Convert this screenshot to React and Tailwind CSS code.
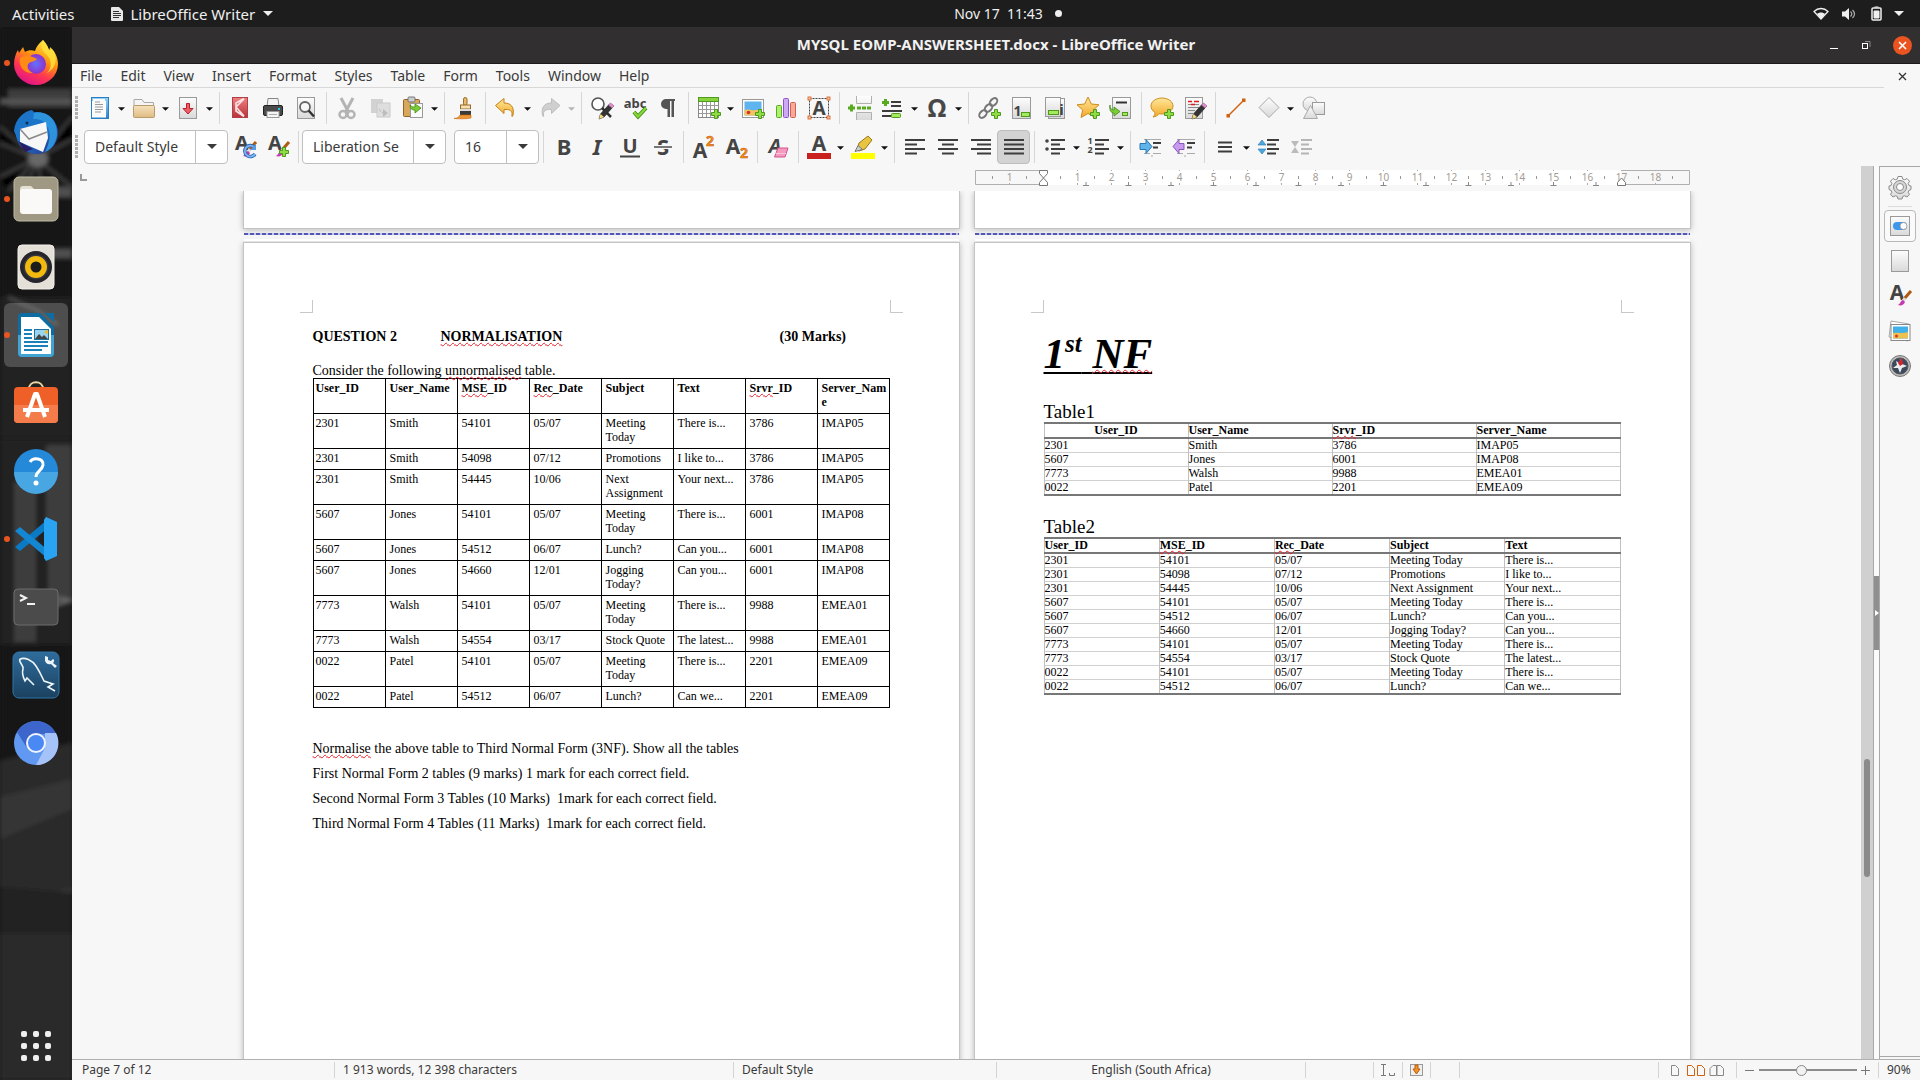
import React from 'react';

/* ---------- shared drawing helpers ---------- */

const Defs = () => (
  <svg width="0" height="0" className="absolute" aria-hidden="true">
    <defs>
      <linearGradient id="paper" x1="0" y1="0" x2="0" y2="1"><stop offset="0" stopColor="#fdfdfd" /><stop offset="1" stopColor="#d9d9d9" /></linearGradient>
      <linearGradient id="blue" x1="0" y1="0" x2="0" y2="1"><stop offset="0" stopColor="#8fd0f8" /><stop offset="1" stopColor="#2f86cf" /></linearGradient>
      <linearGradient id="tan" x1="0" y1="0" x2="0" y2="1"><stop offset="0" stopColor="#f6e2bd" /><stop offset="1" stopColor="#dfbb83" /></linearGradient>
      <linearGradient id="gold" x1="0" y1="0" x2="0" y2="1"><stop offset="0" stopColor="#ffe79a" /><stop offset="1" stopColor="#f2a929" /></linearGradient>
      <linearGradient id="leaf" x1="0" y1="0" x2="0" y2="1"><stop offset="0" stopColor="#b6ef6f" /><stop offset="1" stopColor="#5fae20" /></linearGradient>
      <linearGradient id="rose" x1="0" y1="0" x2="0" y2="1"><stop offset="0" stopColor="#f08080" /><stop offset="1" stopColor="#b8323c" /></linearGradient>
      <linearGradient id="fox" x1="0.8" y1="0" x2="0.3" y2="1"><stop offset="0" stopColor="#fff44f" /><stop offset="0.4" stopColor="#ff980e" /><stop offset="0.7" stopColor="#ff3750" /><stop offset="1" stopColor="#e0128d" /></linearGradient>
      <radialGradient id="globe"><stop offset="0" stopColor="#6173ff" /><stop offset="1" stopColor="#9030c8" /></radialGradient>
      <linearGradient id="bird" x1="0" y1="0" x2="1" y2="1"><stop offset="0" stopColor="#1f8fe0" /><stop offset="0.6" stopColor="#1e5fb8" /><stop offset="1" stopColor="#33307f" /></linearGradient>
      <linearGradient id="mysql" x1="0" y1="0" x2="0" y2="1"><stop offset="0" stopColor="#2f6c9c" /><stop offset="1" stopColor="#1b415f" /></linearGradient>
      <filter id="soft"><feGaussianBlur stdDeviation="2" /></filter>
    </defs>
  </svg>
);

const Svg = ({ s = 24, children }) => (
  <svg width={s} height={s} viewBox={`0 0 ${s} ${s}`} fill="none" aria-hidden="true" className="shrink-0 overflow-visible">{children}</svg>
);

const Glyph = ({ x, y, size, children, fill = '#444', ...rest }) => (
  <text x={x} y={y} fontSize={size} fontWeight="700" fontFamily='"Noto Sans", sans-serif' textAnchor="middle" fill={fill} {...rest}>{children}</text>
);

const Plus = ({ x = 14, y = 13 }) => (
  <path transform={`translate(${x} ${y})`} d="M3.5.5h3v3h3v3h-3v3h-3v-3h-3v-3h3z" fill="#8fdc45" stroke="#4d9a1c" />
);

const Sheet = ({ x = 3.5, y = 1.5, w = 17, h = 21 }) => (
  <rect x={x} y={y} width={w} height={h} fill="url(#paper)" stroke="#9a9a9a" />
);

const Lines = ({ rows, c = '#3d3d3d', w = 2 }) => (
  <>{rows.map(([x1, x2, y]) => <path key={`${x1}-${y}`} d={`M${x1} ${y}H${x2}`} stroke={c} strokeWidth={w} />)}</>
);

const Brush = () => (
  <g>
    <path d="M23 7l-7 8" stroke="#b05a10" strokeWidth="3" /><path d="M17 14l-2 3" stroke="#ddd" strokeWidth="3" />
    <path d="M15 16c-2 0-2 3-5 5 3 1 6 0 7-3z" fill="#c43bb0" />
  </g>
);

const Pencil = () => (
  <g>
    <path d="M9 23l1.500-5 8-9 3.500 3-8 9z" fill="#333" stroke="#222" strokeWidth=".7" />
    <path d="M18.500 9l2-2 3.500 3-2 2z" fill="#dd94cf" stroke="#a05590" strokeWidth=".7" />
    <path d="M9 23l1.500-5 3.500 3z" fill="#f3dc7a" />
  </g>
);

/* ---------- toolbar icons ---------- */

const I = {
  newDoc: <><rect x="3.500" y="1.500" width="17" height="21" fill="#fff" stroke="#2b7fc0" /><path d="M4 2h16v20h-2V5H4z" fill="url(#blue)" /><rect x="5" y="3" width="12" height="17" fill="#fafafa" /><Lines w={1} c="#999" rows={[[7, 12, 6], [7, 15, 8.5], [7, 15, 11], [7, 15, 13.5], [7, 13, 16]]} /><path d="M4 22h16" stroke="#2b7fc0" /></>,
  open: <><path d="M2 20V3.500h8l2 3h9.500V20z" fill="#f5f5f5" stroke="#a9a9a9" /><rect x="1.500" y="9.500" width="21" height="12" rx="1" fill="url(#tan)" stroke="#b99a6b" /></>,
  save: <><Sheet /><path d="M10.500 7.500h3v5h3.500l-5 5.500-5-5.500h3.500z" fill="#ef5d65" stroke="#b3232c" /></>,
  pdf: <><rect x="4.500" y="1.500" width="15" height="20" fill="url(#rose)" stroke="#b04048" /><path d="M16 2.500L8 7v8l8 5.500M8 11l8-8M8 11l8 9" stroke="#fbe3e3" strokeWidth="1.600" /></>,
  print: <><path d="M7 2.500h10l1 8H6z" fill="#f3f3f3" stroke="#888" /><rect x="2.500" y="9.500" width="19" height="10" rx="1.500" fill="#4a4a4a" stroke="#222" /><rect x="17" y="12" width="2" height="2" fill="#2fc4f0" /><rect x="6" y="15.500" width="12" height="6" fill="#f5f5f5" stroke="#999" /><path d="M8 18.500h8" stroke="#aaa" /></>,
  preview: <><Sheet /><circle cx="11" cy="11" r="5" fill="#fff" fillOpacity=".6" stroke="#666" strokeWidth="1.800" /><path d="M14.500 14.500l5.500 6" stroke="#333" strokeWidth="2.500" /></>,
  cut: <g stroke="#b4b4b4"><path d="M6 2l7.500 14M18 2l-7.500 14" strokeWidth="3" /><circle cx="8" cy="18.500" r="3.500" strokeWidth="2.500" /><circle cx="16" cy="18.500" r="3.500" strokeWidth="2.500" /></g>,
  copy: <><rect x="3" y="3" width="12" height="14" fill="#d2d2d2" /><rect x="9" y="7" width="13" height="14" fill="#dedede" stroke="#cacaca" /><path d="M11 12c0 3 1 4 4 4v-3l5 4-5 4v-3" fill="#bdbdbd" /></>,
  paste: <><rect x="2.500" y="3.500" width="16" height="17" rx="1" fill="#d9a75c" stroke="#8e6426" /><rect x="7" y="1" width="7" height="5" rx="1" fill="#ccc" stroke="#777" /><rect x="9.500" y="7.500" width="12" height="14" fill="#fafafa" stroke="#999" /><path d="M9 9c0 4 2 5 5 5v3l6-5-6-4v3c-2 0-3 0-5-2z" fill="#7ccc33" stroke="#3f8a14" strokeWidth=".8" /></>,
  clone: <><rect x="10.500" y="1.500" width="3.500" height="8" rx="1.700" fill="#eab96b" stroke="#9a6b20" /><rect x="7.500" y="9" width="10" height="4" fill="#f5e0b5" stroke="#9a6b20" /><rect x="7" y="13" width="11" height="3" fill="#ddd" /><rect x="7" y="15" width="11" height="5" fill="#3a3a3a" /><path d="M7 19h11v3c-4 1-12 1-17 .5 4-.5 5-1.500 6-3.500z" fill="#ef9637" stroke="#c36a0c" strokeWidth=".6" /></>,
  undo: <path d="M1.500 9.500L10 2.500v4.500c7 0 10.500 4 9 12-.5 2-1.500 2-1 0 .5-4-2-6-8-5.500v4z" fill="url(#gold)" stroke="#c0821a" />,
  redo: <path d="M22 9.500L13.500 2.500v4.500c-7 0-10.500 4-9 12 .5 2 1.500 2 1 0-.5-4 2-6 8-5.500v4z" fill="#cfcfcf" stroke="#bdbdbd" />,
  find: <><circle cx="8" cy="8" r="6" fill="#fff" stroke="#555" strokeWidth="1.600" /><path d="M12 12l9 9" stroke="#333" strokeWidth="2.500" /><Pencil /></>,
  spell: <><Glyph x="12" y="12" size="13">abc</Glyph><path d="M11 16l4 4.500L23 12" stroke="#3f8a14" strokeWidth="4" /><path d="M11 16l4 4.500L23 12" stroke="#83d838" strokeWidth="2.500" /></>,
  pilcrow: <path d="M19 3H10a5 5 0 000 10h1.500v8H14V5h1.500v16H18V5h1z" fill="#555" />,
  table: <><rect x="1.500" y="1.500" width="20" height="20" fill="#fff" stroke="#888" /><rect x="1.500" y="1.500" width="20" height="4" fill="#86d33e" stroke="#4d9a1c" /><path d="M5.500 6v15M9.500 6v15M13.500 6v15M17.500 6v15M2 9.500h19M2 13.500h19M2 17.500h19" stroke="#999" /><Plus /></>,
  image: <><rect x="1.500" y="3.500" width="21" height="18" fill="#fff" stroke="#999" /><rect x="3.500" y="5.500" width="17" height="14" fill="#5db4ee" /><path d="M3.500 14c4-2 8 2 17-1v6.500h-17z" fill="#f5c25e" /><circle cx="7.500" cy="16.500" r="1.800" fill="#d2332c" /><Plus /></>,
  chart: <><rect x="2.500" y="9.500" width="5" height="12" rx="1" fill="#aef071" stroke="#58ab20" /><rect x="9.500" y="2.500" width="5" height="19" rx="1" fill="#cfa8f5" stroke="#8d54c9" /><rect x="16.500" y="6.500" width="5" height="15" rx="1" fill="#f7a99b" stroke="#d06050" /></>,
  textbox: <><rect x="2.500" y="2.500" width="19" height="19" stroke="#444" strokeDasharray="2 1" /><Glyph x="12" y="19" size="19">A</Glyph>{[[1, 1], [20, 1], [1, 20], [20, 20]].map(([x, y]) => <rect key={`${x}-${y}`} x={x} y={y} width="3" height="3" fill="#ffc9a4" stroke="#d2571c" strokeWidth=".8" />)}</>,
  pagebreak: <><path d="M8.500 0v7.500h15V0M8.500 24v-7.500h15V24" fill="url(#paper)" stroke="#b0b0b0" /><path d="M9 12h15" stroke="#58ab20" strokeWidth="3" strokeDasharray="4 1" /><path d="M3.500 8.500v7M0 12h7" stroke="#58ab20" strokeWidth="3" /></>,
  field: <><Lines rows={[[10, 20, 6], [10, 20, 10], [1, 21, 15], [1, 10, 20]]} /><path d="M4.500 3v7M1 6.500h7" stroke="#58ab20" strokeWidth="3" /><rect x="10.500" y="17.500" width="9" height="4" rx="1" fill="#a4ea5c" stroke="#4d9a1c" /></>,
  omega: <Glyph x="12" y="20.500" size="25" fill="#484848">Ω</Glyph>,
  link: <><g stroke="#777" strokeWidth="2"><ellipse cx="16.500" cy="6" rx="3" ry="4.500" transform="rotate(42 16.500 6)" /><ellipse cx="11.500" cy="12" rx="3" ry="4.500" transform="rotate(42 11.500 12)" /><ellipse cx="6" cy="18" rx="3" ry="4.500" transform="rotate(42 6 18)" /></g><Plus /></>,
  footnote: <><Sheet x={2.5} w={18} /><Glyph x="7.500" y="20" size="14">1</Glyph><rect x="11.500" y="16.500" width="8" height="4" fill="#a4ea5c" stroke="#4d9a1c" /></>,
  endnote: <><Sheet x={5.5} w={16} y={2.5} h={20} /><Sheet x={2.5} w={15} h={19} /><rect x="5.500" y="14.500" width="10" height="4" fill="#a4ea5c" stroke="#4d9a1c" /><Glyph x="18.500" y="19" size="15">i</Glyph></>,
  bookmark: <><path d="M12 1l3.300 7 7.700.8-5.700 5.200 1.700 7.500-7-4-7 4 1.700-7.500L1 8.800 8.700 8z" fill="url(#gold)" stroke="#cf8c1d" /><Plus /></>,
  crossref: <><Sheet w={18} /><path d="M7 6.500h11" stroke="#333" strokeWidth="2" /><path d="M1 9c0 4 2 5 4 5v-3l6 4.500-6 4.500v-3c-3 0-5-3-4-8z" fill="#7ccc33" stroke="#3f8a14" strokeWidth=".8" /><rect x="13.500" y="16.500" width="5" height="3" fill="#a4ea5c" stroke="#4d9a1c" /></>,
  comment: <><path d="M12 2c6 0 11 3.500 11 8s-5 8-11 8c-1 0-2 0-3-.3-1.500 2-3.500 3-6 3.300 1.500-1.500 2-3 2-4.500C2.500 15 1 12.800 1 10c0-4.500 5-8 11-8z" fill="url(#gold)" stroke="#cf9020" /><Plus /></>,
  track: <><Sheet x={2.5} w={17} /><Lines w={1} c="#888" rows={[[5, 16, 8.5], [5, 16, 11.5], [5, 12, 14.5], [5, 10, 17.5]]} /><path d="M5 5.500h4M11 5.500h5M8 8.500h4" stroke="#e01b1b" strokeWidth="1.500" /><Pencil /></>,
  line: <><path d="M4 20L20 4" stroke="#d2600f" strokeWidth="1.500" /><rect x="2.500" y="18" width="3.500" height="3.500" fill="#d2600f" /><rect x="18" y="2.500" width="3.500" height="3.500" fill="#d2600f" /></>,
  diamond: <path d="M12 1.500l10 10-10 10-10-10z" fill="url(#paper)" stroke="#a8a8a8" />,
  shapes: <><circle cx="9" cy="8" r="7" fill="url(#paper)" stroke="#aaa" /><rect x="11.500" y="6.500" width="12" height="12" fill="url(#paper)" stroke="#999" /><path d="M9.500 9.500l7 13h-14z" fill="url(#paper)" stroke="#aaa" /></>,
  updStyle: <><Glyph x="9" y="15" size="20">A</Glyph><Brush /><path d="M21 12a5.500 5.500 0 101 7" stroke="#2a68b8" strokeWidth="3.500" /><path d="M21 12a5.500 5.500 0 101 7" stroke="#7fb5f0" strokeWidth="1.800" /><path d="M23 9v6h-6z" fill="#5a9ae0" /></>,
  newStyle: <><Glyph x="9" y="15" size="20">A</Glyph><Brush /><Plus x={13} y={12} /></>,
  bold: <Glyph x="12" y="20" size="22">B</Glyph>,
  italic: <Glyph x="12" y="20" size="22" fontStyle="italic">I</Glyph>,
  underline: <><Glyph x="12" y="18" size="20">U</Glyph><path d="M2 21.500h20" stroke="#444" strokeWidth="2" /></>,
  strike: <><Glyph x="12" y="20" size="22">S</Glyph><path d="M3 12h18" stroke="#f7f7f7" strokeWidth="4" /><path d="M3 12h18" stroke="#777" strokeWidth="2" /></>,
  sup: <><Glyph x="8" y="23" size="21">A</Glyph><Glyph x="18" y="11" size="14" fill="#f5901d" stroke="#c2560a" strokeWidth=".5">2</Glyph></>,
  sub: <><Glyph x="8" y="19" size="21">A</Glyph><Glyph x="19" y="23" size="14" fill="#f5901d" stroke="#c2560a" strokeWidth=".5">2</Glyph></>,
  clear: <><Glyph x="9" y="18" size="20" fontStyle="italic">A</Glyph><path d="M12 13h10l-3 9H8.500z" fill="#f79ac0" stroke="#d0558e" /><path d="M9.500 18.500h10.500" stroke="#fbc4dc" /></>,
  color: <><Glyph x="12" y="16" size="21">A</Glyph><path d="M0 21h24" stroke="#c9211e" strokeWidth="6" /></>,
  marker: <><path d="M6 15l2-7 9-7 4 4-7 9-6 2z" fill="#e9c443" stroke="#9a7a15" /><path d="M4 16.500l3-6 4.500 4z" fill="#cfcfcf" stroke="#777" /><path d="M0 21h24" stroke="#ffff00" strokeWidth="6" /></>,
  left: <Lines rows={[[2, 22, 5], [2, 14, 9.5], [2, 22, 14], [2, 14, 18.5]]} />,
  center: <Lines rows={[[2, 22, 5], [6, 18, 9.5], [2, 22, 14], [6, 18, 18.5]]} />,
  right: <Lines rows={[[2, 22, 5], [8, 22, 9.5], [2, 22, 14], [8, 22, 18.5]]} />,
  justify: <Lines rows={[[2, 22, 5], [2, 22, 9.5], [2, 22, 14], [2, 22, 18.5]]} />,
  bullets: <><circle cx="4" cy="6" r="1.800" fill="#444" /><circle cx="4" cy="14" r="1.800" fill="#444" /><Lines rows={[[8, 22, 5], [8, 17, 9.5], [8, 22, 14], [8, 17, 18.5]]} /></>,
  numbers: <><Glyph x="3" y="9" size="9">1</Glyph><Glyph x="3" y="18" size="9">2</Glyph><Lines rows={[[8, 22, 5], [8, 17, 9.5], [8, 22, 14], [8, 17, 18.5]]} /></>,
  indent: <><Lines w={1} c="#aaa" rows={[[5, 22, 4.5], [14, 22, 18.5], [5, 11, 18.5], [12, 14, 21]]} /><Lines rows={[[14, 22, 8], [14, 19, 12.5]]} /><path d="M1 8.500h6v-4l6 7-6 7v-4H1z" fill="#5fb4ea" stroke="#2a77b4" /></>,
  outdent: <><Lines w={1} c="#aaa" rows={[[5, 23, 4.5], [15, 23, 18.5], [5, 11, 18.5], [12, 14, 21]]} /><Lines rows={[[15, 23, 8], [15, 20, 12.5]]} /><path d="M12 8.500H7v-4l-6 7 6 7v-4h5z" fill="#c79af0" stroke="#8a55bd" /></>,
  spacing: <Lines rows={[[5, 19, 7.5], [5, 19, 12], [5, 19, 16.5]]} />,
  incSpace: <><path d="M5 5l4 5H1zM5 19l4-5H1z" fill="#4ba7dc" stroke="#2a77b4" strokeWidth=".6" /><Lines rows={[[10, 22, 5], [10, 19, 9.5], [10, 22, 14], [10, 19, 18.5]]} /></>,
  decSpace: <><path d="M5 12l4-6H1zM5 12l4 6H1z" fill="#bbb" /><Lines c="#b5b5b5" rows={[[11, 22, 5], [11, 19, 9.5], [11, 22, 14], [11, 19, 18.5]]} /></>,
};

const Caret = ({ c = '#111', w = 7 }) => (
  <svg width={w} height={Math.ceil(w / 2)} viewBox="0 0 8 4" aria-hidden="true"><path d="M0 0h8L4 4z" fill={c} /></svg>
);

const Tool = ({ name, label, menu, dim, pressed }) => (
  <>
    <button type="button" aria-label={label} className={`flex h-[34px] w-[33px] items-center justify-center rounded ${pressed ? 'border border-[#bdbdbd] bg-[#d3d3d3]' : ''}`}>
      <Svg>{I[name]}</Svg>
    </button>
    {menu ? (
      <button type="button" aria-label={`${label} options`} className="flex h-[34px] w-[11px] items-center justify-center pt-0.5">
        <Caret c={dim ? '#b5b5b5' : '#111'} />
      </button>
    ) : null}
  </>
);

const Sep = () => <span className="flex h-8 w-2 justify-center"><span className="w-px bg-[#d6d6d6]" /></span>;
const Grip = () => <span className="h-6 w-[3px] bg-[repeating-linear-gradient(#b0b0b0_0_3px,transparent_3px_4px)]" />;

const ROW1 = [
  ['newDoc', 'New', 1], ['open', 'Open', 1], ['save', 'Save', 1], 0,
  ['pdf', 'Export as PDF'], ['print', 'Print'], ['preview', 'Print preview'], 0,
  ['cut', 'Cut'], ['copy', 'Copy'], ['paste', 'Paste', 1], 0,
  ['clone', 'Clone formatting'], 0,
  ['undo', 'Undo', 1], ['redo', 'Redo', 1, 1], 0,
  ['find', 'Find and replace'], ['spell', 'Spelling'], ['pilcrow', 'Formatting marks'], 0,
  ['table', 'Insert table', 1], ['image', 'Insert image'], ['chart', 'Insert chart'], ['textbox', 'Insert text box'], 0,
  ['pagebreak', 'Insert page break'], ['field', 'Insert field', 1], ['omega', 'Special character', 1], 0,
  ['link', 'Insert hyperlink'], ['footnote', 'Insert footnote'], ['endnote', 'Insert endnote'], ['bookmark', 'Insert bookmark'], ['crossref', 'Insert cross-reference'], 0,
  ['comment', 'Insert comment'], ['track', 'Track changes'], 0,
  ['line', 'Insert line'], ['diamond', 'Basic shapes', 1], ['shapes', 'Show draw functions'],
];

const ROW2 = [
  ['bold', 'Bold'], ['italic', 'Italic'], ['underline', 'Underline'], ['strike', 'Strikethrough'], 0,
  ['sup', 'Superscript'], ['sub', 'Subscript'], 0, ['clear', 'Clear formatting'], 0,
  ['color', 'Font color', 1], ['marker', 'Highlighting', 1], 0,
  ['left', 'Align left'], ['center', 'Center'], ['right', 'Align right'], ['justify', 'Justified', 0, 0, 1], 0,
  ['bullets', 'Bullets', 1], ['numbers', 'Numbering', 1], 0,
  ['indent', 'Increase indent'], ['outdent', 'Decrease indent'], 0,
  ['spacing', 'Line spacing', 1], ['incSpace', 'Increase paragraph spacing'], ['decSpace', 'Decrease paragraph spacing'],
];

const Tools = ({ items }) => items.map((t, i) => (t
  ? <Tool key={t[0]} name={t[0]} label={t[1]} menu={t[2]} dim={t[3]} pressed={t[4]} />
  : <Sep key={i} />));

const Combo = ({ label, value, width }) => (
  <div className={`flex h-[34px] overflow-hidden rounded border border-[#bfbfbf] bg-white ${width}`}>
    <input aria-label={label} defaultValue={value} className="w-0 flex-1 bg-transparent pl-2.5 text-sm text-[#3a3a3a] outline-none" />
    <button type="button" aria-label={`${label} list`} className="flex w-8 items-center justify-center border-l border-[#bfbfbf]"><Caret c="#3a3a3a" w={10} /></button>
  </div>
);

/* ---------- dock ---------- */

const DOCK = [
  ['Firefox', 1, <><path d="M31 1c3 3 5 7 6 10 1-1 1-2 1-3 5 4 8 11 8 17a22 21 0 01-44 0c0-6 2-11 4-14l1 3 4-6 2 5c3-2 7-2 10-1 1-4 4-8 8-11z" fill="url(#fox)" /><path d="M31 1c-4 7 0 11 4 15 5 5 5 13 0 18 10-5 11-17 5-24-1 1-2 1-3 1-1-3-3-7-6-10z" fill="#ffe03c" opacity=".85" /><circle cx="24" cy="25" r="10" fill="url(#globe)" /><path d="M8 19c5-4 12-2 17 1-2 3-6 2-8 4-3 3-1 8 4 10-8 1-15-6-13-15z" fill="#ff8a16" /></>],
  ['Thunderbird', 0, <><circle cx="25" cy="26" r="21" fill="url(#bird)" /><path d="M2 24C3 12 12 4 20 3l3 3c12 2 16 14 13 26l-9 8-20-4z" fill="#1b74c8" /><path d="M22 6c14-3 24 8 23 22-1 8-5 14-12 17 4-8 7-18 2-26-3-6-8-7-14-7z" fill="#2c93dc" /><path d="M8 22l26-7 2 16-5 14-23-10z" fill="#f7f7f7" /><path d="M8 22l9 10 18-7" stroke="#8a8a8a" strokeWidth="1.500" /><path d="M6 34l15 8-8 3z" fill="#2b1c66" /><circle cx="15" cy="16" r="1.500" fill="#0d2f55" /></>],
  ['Files', 1, <><rect x="2" y="2" width="44" height="44" rx="5" fill="#9f9882" stroke="#c1bba8" /><path d="M8 14a3 3 0 013-3h8l4 4h-2v10H8z" fill="#e3e0d5" /><rect x="8" y="14" width="32" height="25" rx="3" fill="#faf9f7" /></>],
  ['Rhythmbox', 0, <><rect x="6" y="2" width="36" height="44" rx="4" fill="#e4e0d8" stroke="#f4f1ea" /><circle cx="24" cy="24" r="16" fill="#25252b" /><circle cx="24" cy="24" r="12.500" fill="#343642" /><circle cx="24" cy="24" r="11" fill="#f2b90f" /><circle cx="24" cy="24" r="5.500" fill="#1c1c1c" /></>],
  ['LibreOffice Writer', 2, <><path d="M6 6a4 4 0 014-4h18l14 14v26a4 4 0 01-4 4H10a4 4 0 01-4-4z" fill="#0f6ca0" /><path d="M6 24h36v18a4 4 0 01-4 4H10a4 4 0 01-4-4z" fill="#3fa3d3" /><path d="M9 6h18l12 12v25H9z" fill="#fff" /><path d="M32 2h10v9z" fill="#0f6ca0" /><path d="M12 19h8M12 23h8M12 27h8M12 31h24M12 35h24M12 39h18" stroke="#1a82b8" strokeWidth="2" /><rect x="22.500" y="18.500" width="14" height="10" fill="#9bd4ef" stroke="#1a70a0" /><path d="M23 28l4-5 3 3 2-2 4 4z" fill="#444" /><circle cx="34.500" cy="21" r="1.800" fill="#f1bd2a" /></>],
  ['Ubuntu Software', 0, <><path d="M17 10c0-9 14-9 14 0" stroke="#f0d8a5" strokeWidth="2" /><rect x="2" y="8" width="44" height="36" rx="4" fill="#ef5f28" /><path d="M2 26h44v14a4 4 0 01-4 4H6a4 4 0 01-4-4z" fill="#f47c4a" /><path d="M15 38l8-23h2l8 23M11 31h26" stroke="#fff" strokeWidth="4" strokeLinejoin="round" /></>],
  ['Help', 0, <><circle cx="24" cy="24" r="22" fill="#2489d8" /><path d="M2 25a22 22 0 0044 0z" fill="#48a6e3" /><path d="M18 15c3-5 14-4 13 3-1 6-7 6-7 12" stroke="#fff" strokeWidth="3" /><circle cx="24" cy="36" r="2.500" fill="#fff" /></>],
  ['Visual Studio Code', 1, <><path d="M3 32l5 4L36 13V4z" fill="#0a7ac4" /><path d="M3 16l5-4 28 23v9z" fill="#1487d2" /><path d="M34 2l11 5v34l-11 5-2-3V5z" fill="#29a4f2" /></>],
  ['Terminal', 0, <><rect x="2" y="6" width="44" height="36" rx="4" fill="#4b4b4b" stroke="#6d6d6d" /><path d="M8 12l6 3-6 3M15 21h8" stroke="#f3f3f3" strokeWidth="2" /></>],
  ['MySQL Workbench', 0, <><rect x="1" y="1" width="46" height="46" rx="6" fill="url(#mysql)" stroke="#2f76a8" /><path d="M8 8c5-2 12 1 16 7 4 6 6 11 8 15l9 3-5 3 7 4M8 8c-2 3 4 6 3 10-1 3 0 8 2 12l2-3 7 7" stroke="#eef5fa" strokeWidth="1.600" /><path d="M33 5l3 1v3l3 1 2-2c2 1 1 3 0 4l4 3-2 2-4-4c-3 1-6-1-6-4z" fill="#eef5fa" /></>],
  ['Chromium', 0, <><circle cx="24" cy="24" r="22" fill="#6199f2" /><path d="M5 13a22 22 0 0138 0l1 2H24l-9 14z" fill="#3c66cc" /><path d="M44 14a22 22 0 01-20 32l9-17V14z" fill="#a5c3f9" /><circle cx="24" cy="24" r="10" fill="#f2f5ff" /><circle cx="24" cy="24" r="8" fill="#4a88f3" /></>],
];

const Dock = () => (
  <nav aria-label="Dock" className="relative flex w-[72px] shrink-0 flex-col overflow-hidden bg-[#1c1c1c]">
    <svg className="absolute inset-0 h-full w-full" viewBox="0 0 72 1053" preserveAspectRatio="none" aria-hidden="true">
      <g filter="url(#soft)">
        <rect width="72" height="270" fill="#191919" />
        <path d="M8 62h64v18H8z" fill="#3d3d3d" /><path d="M0 72h72v5H0z" fill="#565656" />
        <path d="M0 100l34 30L0 116M0 150l36-18-28 32M20 172l18-38 4 40M72 90l-30 38 30-16M72 160l-30-24" stroke="#4c4c4c" strokeWidth="2" />
        <ellipse cx="38" cy="132" rx="10" ry="8" fill="#686868" />
        <path d="M44 160h28v10H44zM44 222h28v9H44z" fill="#505050" />
        <rect y="270" width="72" height="140" fill="#242424" /><path d="M8 270l30 14 20 14" stroke="#555" strokeWidth="2" />
        <path d="M0 412h72v220H0z" fill="#222" /><path d="M14 455h22v160H14zM46 418h26v80H46zM48 490h24v80H48z" fill="#3c3c3c" />
        <path d="M40 585q8-18 30-12l-30 10" stroke="#6a6a6a" strokeWidth="3" />
        <path d="M0 618h72v100L0 736z" fill="#191919" /><path d="M0 734l72-18v337H0z" fill="#2b2b2b" />
        <path d="M0 770l72-18v30L0 812zM0 880l72-20v16z" fill="#343434" /><path d="M0 860l72 6v40H0z" fill="#222" />
      </g>
    </svg>
    <ul className="relative pt-0.5">
      {DOCK.map(([name, run, art]) => (
        <li key={name} className="flex h-[68px] items-center justify-center px-1">
          <button type="button" aria-label={name} className={`relative flex h-16 w-full items-center justify-center rounded-md ${run === 2 ? 'bg-white/20' : ''}`}>
            {run > 0 && <span className="absolute left-0 h-1.5 w-1.5 rounded-full bg-[#e95420]" />}
            <Svg s={48}>{art}</Svg>
          </button>
        </li>
      ))}
    </ul>
    <button type="button" aria-label="Show applications" className="relative mt-auto mb-[19px] grid grid-cols-3 gap-1.5 self-center">
      {Array.from({ length: 9 }, (_, i) => <span key={i} className="h-1.5 w-1.5 rounded-xs bg-[#f0f0f0]" />)}
    </button>
  </nav>
);

/* ---------- document ---------- */

const Bad = ({ children }) => <span className="underline decoration-[#e8202a] decoration-wavy decoration-1 underline-offset-1 [text-decoration-skip-ink:none]">{children}</span>;

const RECORDS = [
  ['2301', 'Smith', '54101', '05/07', 'Meeting Today', 'There is...', '3786', 'IMAP05'],
  ['2301', 'Smith', '54098', '07/12', 'Promotions', 'I like to...', '3786', 'IMAP05'],
  ['2301', 'Smith', '54445', '10/06', 'Next Assignment', 'Your next...', '3786', 'IMAP05'],
  ['5607', 'Jones', '54101', '05/07', 'Meeting Today', 'There is...', '6001', 'IMAP08'],
  ['5607', 'Jones', '54512', '06/07', 'Lunch?', 'Can you...', '6001', 'IMAP08'],
  ['5607', 'Jones', '54660', '12/01', 'Jogging Today?', 'Can you...', '6001', 'IMAP08'],
  ['7773', 'Walsh', '54101', '05/07', 'Meeting Today', 'There is...', '9988', 'EMEA01'],
  ['7773', 'Walsh', '54554', '03/17', 'Stock Quote', 'The latest...', '9988', 'EMEA01'],
  ['0022', 'Patel', '54101', '05/07', 'Meeting Today', 'There is...', '2201', 'EMEA09'],
  ['0022', 'Patel', '54512', '06/07', 'Lunch?', 'Can we...', '2201', 'EMEA09'],
];

const HEAD = {
  User_ID: 'User_ID', User_Name: 'User_Name', MSE_ID: <><Bad>MSE</Bad>_ID</>, Rec_Date: <><Bad>Rec</Bad>_Date</>,
  Subject: 'Subject', Text: 'Text', Srvr_ID: <><Bad>Srvr</Bad>_ID</>, Server_Name: 'Server_Name',
};

const MainTable = () => (
  <table className="w-full table-fixed border-collapse text-xs leading-[14px]">
    <thead>
      <tr>
        {Object.keys(HEAD).map((h) => <th key={h} className="border border-black pt-0.5 pb-1 pl-1 text-left align-top font-bold break-all first:pl-0.5">{HEAD[h]}</th>)}
      </tr>
    </thead>
    <tbody>
      {RECORDS.map((r, i) => (
        <tr key={i}>{r.map((c, j) => <td key={j} className="border border-black pt-0.5 pb-1 pl-1 align-top first:pl-0.5">{c}</td>)}</tr>
      ))}
    </tbody>
  </table>
);

const SlimTable = ({ cols, rows, centerFirst }) => (
  <table className="w-full table-fixed border-collapse border-x border-y-2 border-x-[#c0c0c0] border-y-[#777] text-xs leading-[13px]">
    <thead>
      <tr className="border-b-2 border-[#777]">
        {cols.map((h, i) => <th key={h} className={`border-x border-[#c0c0c0] p-0 font-bold ${centerFirst && i === 0 ? 'text-center' : 'text-left'}`}>{HEAD[h]}</th>)}
      </tr>
    </thead>
    <tbody>
      {rows.map((r, i) => (
        <tr key={i} className="border-b border-[#d0d0d0] last:border-0">{r.map((c, j) => <td key={j} className="border-x border-[#c0c0c0] p-0">{c}</td>)}</tr>
      ))}
    </tbody>
  </table>
);

const TABLE1 = [RECORDS[0], RECORDS[3], RECORDS[6], RECORDS[8]].map((r) => [r[0], r[1], r[6], r[7]]);
const TABLE2 = RECORDS.map((r) => [r[0], r[2], r[3], r[4], r[5]]);

const Page = ({ children }) => (
  <div className="w-[717px] shrink-0">
    <div className="h-[38px] border border-t-0 border-[#c4c4c4] bg-white shadow-[0_1px_6px_rgba(0,0,0,0.25)]" />
    <div className="relative h-[13px] px-px pt-1">
      <div className="h-0.5 bg-[repeating-linear-gradient(90deg,#5656b4_0_4px,#c3c3f0_4px_6px)]" />
      <div className="mt-1 h-0.5 bg-white" />
    </div>
    <article className="h-[1012px] border border-[#c4c4c4] bg-white font-['Liberation_Serif',serif] text-black shadow-[0_1px_6px_rgba(0,0,0,0.25)]">
      <div className="flex h-[70px] items-end justify-between px-14">
        <span className="h-[13px] w-[13px] border-r border-b border-[#c8c8c8]" />
        <span className="h-[13px] w-[13px] border-b border-l border-[#c8c8c8]" />
      </div>
      <div className="px-[69px]">{children}</div>
    </article>
  </div>
);

const LeftPage = () => (
  <Page>
    <h2 className="mt-4 flex text-[14px] leading-4 font-bold whitespace-nowrap">
      <span className="w-32">QUESTION 2</span>
      <span className="flex-1"><Bad>NORMALISATION</Bad></span>
      <span className="w-[110px]">(30 Marks)</span>
    </h2>
    <p className="mt-[18px] text-[14px] leading-[15px]">Consider the following <Bad>unnormalised</Bad> table.</p>
    <MainTable />
    <div className="mt-7 text-[14px] leading-[25px] whitespace-pre-wrap">
      <p><Bad>Normalise</Bad> the above table to Third Normal Form (3NF). Show all the tables</p>
      <p>First Normal Form 2 tables (9 marks) 1 mark for each correct field.</p>
      <p>{'Second Normal Form 3 Tables (10 Marks)  1mark for each correct field.'}</p>
      <p>{'Third Normal Form 4 Tables (11 Marks)  1mark for each correct field.'}</p>
    </div>
  </Page>
);

const RightPage = () => (
  <Page>
    <h1 className="mt-[17px] text-[43px] leading-[48px] font-bold italic">
      <span className="underline decoration-2 underline-offset-4 [text-decoration-skip-ink:none]">
        1<span className="align-[16px] text-[25px] leading-none">st</span> <Bad>NF</Bad>
      </span>
    </h1>
    <p className="mt-[23px] text-[19px] leading-[21px]">Table1</p>
    <SlimTable cols={['User_ID', 'User_Name', 'Srvr_ID', 'Server_Name']} rows={TABLE1} centerFirst />
    <p className="mt-5 text-[19px] leading-[21px]">Table2</p>
    <SlimTable cols={['User_ID', 'MSE_ID', 'Rec_Date', 'Subject', 'Text']} rows={TABLE2} />
  </Page>
);

const Ruler = () => (
  <svg width="717" height="18" viewBox="0 0 717 18" aria-hidden="true" fontFamily='"Noto Sans", sans-serif' fontSize="10">
    <rect x="69" width="578" height="15" fill="#fff" />
    <path d="M69 .5H1.500v14H69M647 .5h68.500v14H647" fill="none" stroke="#b0b0b0" />
    {Array.from({ length: 20 }, (_, i) => i - 1).filter((n) => n !== 0 && n < 19).map((n) => (
      <g key={n}>
        <text x={69.5 + n * 34} y="11" textAnchor="middle" fill="#a39c94">{Math.abs(n)}</text>
        <path d={`M${69.5 + n * 34} 0v1M${69.5 + n * 34} 13v2`} stroke="#aaa" />
      </g>
    ))}
    {Array.from({ length: 21 }, (_, i) => i - 2).filter((n) => n < 19).map((n) => <path key={n} d={`M${86.5 + n * 34} 6v3`} stroke="#999" />)}
    {Array.from({ length: 13 }, (_, i) => i + 1).map((n) => <path key={n} d={`M${69.5 + n * 42.5} 12v3M${66.5 + n * 42.5} 15.500h6`} stroke="#888" />)}
    <path d="M65.500.5h8v3l-4 4.500-4-4.500zM65.500 15.500h8v-3L69.500 8l-4 4.500zM643.500 15.500h8v-3l-4-4.500-4 4.500z" fill="#fff" stroke="#777" />
  </svg>
);

/* ---------- side bar and status bar ---------- */

const SIDE = [
  ['Properties', <><Sheet x={2.5} w={19} y={2.5} h={19} /><rect x="5" y="8" width="14" height="8" rx="4" fill="#3f97ec" /><circle cx="15.500" cy="12" r="3.500" fill="#fff" stroke="#888" strokeWidth=".7" /></>],
  ['Page', <Sheet />],
  ['Styles', <><Glyph x="9" y="16" size="21">A</Glyph><Brush /></>],
  ['Gallery', <><path d="M3 2l18 3-1 17-19-4z" fill="#fff" stroke="#aaa" /><rect x="3" y="5.500" width="19" height="16" fill="#fff" stroke="#888" /><rect x="5" y="7.500" width="15" height="12" fill="#3fb0e8" /><path d="M5 14c4-1 8 1 15-1v6.500H5z" fill="#eec050" /><circle cx="8.500" cy="17" r="1.500" fill="#d2332c" /></>],
  ['Navigator', <><circle cx="12" cy="12" r="10.500" fill="#bbb" stroke="#777" /><circle cx="12" cy="12" r="8" fill="#3c4a60" stroke="#555" /><path d="M13 5l1 5 5 2-5 2-2 5-2-5-5 0 4-3-1-4 3 2z" fill="#eee" /><path d="M14 4l1 6-3 2-2-3z" fill="#d8232f" /></>],
];

const Sidebar = () => (
  <aside aria-label="Sidebar" className="mb-0.5 flex w-10 flex-col items-center border-t border-b border-[#a8a8a8] bg-[#f7f7f7] pt-2">
    <button type="button" aria-label="Sidebar settings" className="flex h-6 w-8 items-center justify-center">
      <Svg><g stroke="#8a8a8a"><path d="M10 1.500h4l.7 2.500 2 .8 2.300-1.300 2.500 2.700-1.300 2.300.8 2 2 .5v3.500l-2 .8-.8 2 1.300 2-2.500 2.700-2.300-1.200-2 .7-.7 2.500h-4l-.7-2.500-2-.7-2.300 1.200-2.500-2.700 1.300-2-.8-2-2-.8V11l2-.5.8-2-1.300-2.300L5 3.500l2.300 1.300 2-.8z" fill="url(#paper)" /><circle cx="12" cy="12" r="6.500" fill="#d6d6d6" /><circle cx="12" cy="12" r="3.500" fill="#fff" /></g></Svg>
    </button>
    <span className="mt-[7px] mb-[3px] h-px w-6 bg-[#dcdcdc]" />
    <div className="flex flex-col gap-[3px]">
      {SIDE.map(([name, art], i) => (
        <button key={name} type="button" aria-label={name} className={`flex h-8 w-8 items-center justify-center rounded ${i === 0 ? 'border border-[#b8b8b8] bg-[#fafafa]' : ''}`}><Svg>{art}</Svg></button>
      ))}
    </div>
  </aside>
);

const Cell = ({ className = '', children }) => <div className={`flex h-4 items-center border-l border-[#d4d4d4] ${className}`}>{children}</div>;

const StatusBar = () => (
  <footer className="flex h-[21px] shrink-0 items-center border-t border-[#b0b0b0] bg-[#f7f7f7] text-xs whitespace-nowrap text-[#3a3a3a]">
    <div className="w-[262px] pl-2.5">Page 7 of 12</div>
    <Cell className="w-[399px] pl-2">1 913 words, 12 398 characters</Cell>
    <Cell className="w-[263px] pl-2">Default Style</Cell>
    <Cell className="w-[309px] justify-center">English (South Africa)</Cell>
    <Cell className="w-[68px]" />
    <Cell className="w-[29px] justify-center"><Svg s={16}><path d="M1 2.500h5M1 13.500h5M3.500 3v10M9.500 11v2.500h5V11" stroke="#777" /></Svg></Cell>
    <Cell className="w-7 justify-center"><Svg s={16}><rect x="1.500" y="2.500" width="12" height="11" fill="#eee" stroke="#999" /><path d="M6 3h3v4h2l-3.500 5L4 7h2z" fill="#f0922b" stroke="#b85c0a" /></Svg></Cell>
    <Cell className="w-[29px]" />
    <Cell className="flex-1" />
    <Cell className="w-[78px] justify-center gap-[3px] pr-1">
      <button type="button" aria-label="Single-page view"><Svg s={16}><path d="M4.500 3.500h4l3 3v7h-7z" stroke="#888" /></Svg></button>
      <button type="button" aria-label="Multiple-page view"><svg width="20" height="16" fill="none" aria-hidden="true"><path d="M1.500 3.500h4l3 3v7h-7zM11.500 3.500h4l3 3v7h-7z" stroke="#d2600f" /></svg></button>
      <button type="button" aria-label="Book view"><Svg s={16}><path d="M7.500 3.500H4l-3 3v7h6.500zM8 3.500h3.500l3 3v7H8z" stroke="#888" /></Svg></button>
    </Cell>
    <Cell className="w-[142px] justify-between px-2">
      <button type="button" aria-label="Zoom out" className="h-px w-[9px] bg-[#777]" />
      <input type="range" aria-label="Zoom" defaultValue="43" className="h-3 w-[98px] appearance-none bg-[linear-gradient(#8c8c8c,#8c8c8c)] bg-[length:100%_2px] bg-center bg-no-repeat [&::-webkit-slider-thumb]:h-[11px] [&::-webkit-slider-thumb]:w-[11px] [&::-webkit-slider-thumb]:appearance-none [&::-webkit-slider-thumb]:rounded-full [&::-webkit-slider-thumb]:border [&::-webkit-slider-thumb]:border-[#888] [&::-webkit-slider-thumb]:bg-[#f2f2f2]" />
      <button type="button" aria-label="Zoom in"><svg width="9" height="9" aria-hidden="true"><path d="M0 4.500h9M4.500 0v9" stroke="#777" /></svg></button>
    </Cell>
    <Cell className="w-[42px] pl-2">90%</Cell>
  </footer>
);

/* ---------- window ---------- */

const MENUS = ['File', 'Edit', 'View', 'Insert', 'Format', 'Styles', 'Table', 'Form', 'Tools', 'Window', 'Help'];

export default function App() {
  return (
    <div className="flex h-screen flex-col overflow-hidden bg-[#1d1d1d] font-['Noto_Sans',sans-serif] text-sm">
      <Defs />
      <header className="grid h-[27px] shrink-0 grid-cols-[1fr_auto_1fr] items-center px-3 text-[15px] leading-5 text-[#efefef]">
        <div className="flex items-center">
          <button type="button">Activities</button>
          <button type="button" className="ml-9 flex items-center gap-2">
            <svg width="12" height="14" aria-hidden="true"><path d="M0 1a1 1 0 011-1h7l4 4v9a1 1 0 01-1 1H1a1 1 0 01-1-1z" fill="#e8e8e8" /><path d="M2 4.500h6M2 6.500h8M2 8.500h8M2 10.500h6" stroke="#333" /></svg>
            <span>LibreOffice Writer</span>
            <Caret c="#efefef" w={10} />
          </button>
        </div>
        <div className="ml-24 flex items-center gap-3"><span className="text-sm whitespace-pre">{'Nov 17  11:43'}</span><span className="h-[7px] w-[7px] rounded-full bg-[#efefef]" /></div>
        <div className="flex items-center justify-end gap-3 pr-1">
          <svg width="16" height="13" viewBox="0 0 16 13" fill="none" aria-hidden="true"><path d="M1 4.500c4-4 10-4 14 0L8 12z" stroke="#efefef" strokeWidth="1.300" /><path d="M4 7c2-2 6-2 8 0l-4 5z" fill="#efefef" /></svg>
          <svg width="16" height="14" viewBox="0 0 16 14" fill="none" aria-hidden="true"><path d="M1 4.500h3L8 1v12L4 9.500H1z" fill="#efefef" /><path d="M9.500 4.500c1.500 1.500 1.500 3.500 0 5M11.500 3c2.500 2.500 2.500 5.500 0 8" stroke="#aaa" strokeWidth="1.200" /></svg>
          <svg width="11" height="15" viewBox="0 0 11 15" fill="none" aria-hidden="true" className="ml-0.5"><rect x="1" y="2" width="9" height="12" rx="1" stroke="#efefef" strokeWidth="1.500" /><path d="M3.500 1h4M3 5h5v7H3z" fill="#efefef" stroke="#efefef" /></svg>
          <Caret c="#efefef" w={10} />
        </div>
      </header>

      <div className="flex min-h-0 flex-1">
        <Dock />
        <main className="flex min-w-0 flex-1 flex-col bg-[#f7f7f7]">
          <div className="grid h-[37px] shrink-0 grid-cols-[1fr_auto_1fr] items-center border-b border-[#1b1a1a] bg-[#322f30] text-[#f2f2f2]">
            <span />
            <h1 className="text-[15px] font-bold">MYSQL EOMP-ANSWERSHEET.docx - LibreOffice Writer</h1>
            <div className="flex items-center justify-end gap-[22px] pr-2">
              <button type="button" aria-label="Minimize" className="mt-1.5 mr-0.5 h-px w-2 bg-white" />
              <button type="button" aria-label="Restore"><svg width="9" height="9" fill="none" aria-hidden="true"><rect x=".5" y="2.500" width="5" height="5" stroke="#fff" /><path d="M3 .5h5V6" stroke="#888" /></svg></button>
              <button type="button" aria-label="Close" className="flex h-[19px] w-[19px] items-center justify-center rounded-full bg-[#e95420]"><svg width="9" height="9" aria-hidden="true"><path d="M1 1l7 7M8 1L1 8" stroke="#fff" strokeWidth="1.600" /></svg></button>
            </div>
          </div>

          <div className="flex h-6 shrink-0 text-[#3a3a3a]">
            <div className="flex flex-1 items-center gap-[18px] border-b border-[#d8d8d8] pl-2">
              {MENUS.map((m) => <button key={m} type="button">{m}</button>)}
            </div>
            <button type="button" aria-label="Close document" className="flex w-9 items-center justify-center"><svg width="9" height="9" aria-hidden="true"><path d="M1 1l7 7M8 1L1 8" stroke="#333" strokeWidth="1.300" /></svg></button>
          </div>

          <div role="toolbar" aria-label="Standard" className="flex h-[39px] shrink-0 items-center pl-[3px]">
            <Grip /><span className="w-[5px]" /><Tools items={ROW1} />
          </div>
          <div role="toolbar" aria-label="Formatting" className="flex h-[39px] shrink-0 items-center pl-[3px]">
            <Grip /><span className="w-1.5" />
            <Combo label="Paragraph style" value="Default Style" width="w-36" />
            <Tool name="updStyle" label="Update style" /><Tool name="newStyle" label="New style" /><Sep />
            <Combo label="Font name" value="Liberation Se" width="w-36" /><span className="w-2" />
            <Combo label="Font size" value="16" width="w-[85px]" /><Sep />
            <Tools items={ROW2} />
          </div>

          <div className="flex min-h-0 flex-1">
            <section aria-label="Document" className="flex min-w-0 flex-1 flex-col overflow-hidden">
              <div className="relative flex h-[25px] shrink-0 items-start justify-center gap-3.5 pt-1">
                <span className="absolute top-2 left-2 h-[7px] w-[7px] border-b-2 border-l-2 border-[#999]" />
                <span className="w-[717px] shrink-0" />
                <Ruler />
              </div>
              <div className="flex min-h-0 flex-1 justify-center gap-3.5 overflow-hidden">
                <LeftPage />
                <RightPage />
              </div>
            </section>
            <div className="flex w-3 shrink-0 flex-col items-center bg-[#d0d0d0]">
              <span className="grow-[592]" /><span className="w-1.5 grow-[118] rounded-full bg-[#8a8a8a]" /><span className="grow-[182]" />
            </div>
            <div className="flex w-[7px] shrink-0 flex-col justify-center border-x border-[#a8a8a8] bg-[#fafafa]">
              <span className="flex h-[74px] items-center justify-center bg-[#8f8f8f]"><svg width="4" height="6" aria-hidden="true"><path d="M0 0l4 3-4 3z" fill="#fff" /></svg></span>
            </div>
            <Sidebar />
          </div>
          <StatusBar />
        </main>
      </div>
    </div>
  );
}
